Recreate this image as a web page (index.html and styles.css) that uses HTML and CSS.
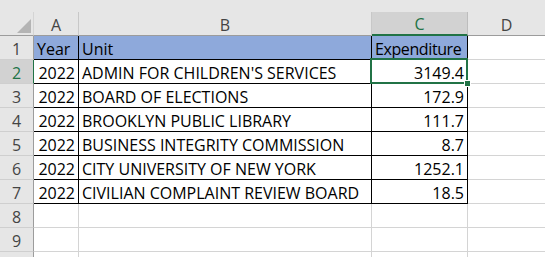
FILE: index.html
```html
<!DOCTYPE html>
<html lang="en">
<head>
    <meta charset="UTF-8">
    <title>Expenditure</title>
    <link rel="stylesheet" href="styles.css">
</head>
<body>
    <div class="topbar"></div>
    <div class="sheet">
        <div class="hd corner"><span class="tri"></span></div>
        <div class="hd col">A</div>
        <div class="hd col">B</div>
        <div class="hd col sel">C</div>
        <div class="hd col last">D</div>

        <div class="hd row">1</div>
        <div class="c num title dk">Year</div>
        <div class="c title dk">Unit</div>
        <div class="c title dk tight">Expenditure</div>
        <div class="c last"></div>

        <div class="hd row sel">2</div>
        <div class="c num dk">2022</div>
        <div class="c dk">ADMIN FOR CHILDREN'S SERVICES</div>
        <div class="c num dk active">3149.4<span class="handle"></span></div>
        <div class="c last"></div>

        <div class="hd row">3</div>
        <div class="c num dk">2022</div>
        <div class="c dk">BOARD OF ELECTIONS</div>
        <div class="c num dk">172.9</div>
        <div class="c last"></div>

        <div class="hd row">4</div>
        <div class="c num dk">2022</div>
        <div class="c dk">BROOKLYN PUBLIC LIBRARY</div>
        <div class="c num dk">111.7</div>
        <div class="c last"></div>

        <div class="hd row">5</div>
        <div class="c num dk">2022</div>
        <div class="c dk">BUSINESS INTEGRITY COMMISSION</div>
        <div class="c num dk">8.7</div>
        <div class="c last"></div>

        <div class="hd row">6</div>
        <div class="c num dk">2022</div>
        <div class="c dk">CITY UNIVERSITY OF NEW YORK</div>
        <div class="c num dk">1252.1</div>
        <div class="c last"></div>

        <div class="hd row">7</div>
        <div class="c num dk">2022</div>
        <div class="c dk">CIVILIAN COMPLAINT REVIEW BOARD</div>
        <div class="c num dk">18.5</div>
        <div class="c last"></div>

        <div class="hd row">8</div>
        <div class="c"></div>
        <div class="c"></div>
        <div class="c"></div>
        <div class="c last"></div>

        <div class="hd row">9</div>
        <div class="c"></div>
        <div class="c"></div>
        <div class="c"></div>
        <div class="c last"></div>

        <div class="hd row"></div>
        <div class="c"></div>
        <div class="c"></div>
        <div class="c"></div>
        <div class="c last"></div>
    </div>
</body>
</html>
```

FILE: styles.css
```css
body {
    margin: 0;
    background: #fff;
    font-family: "Open Sans", "Liberation Sans", sans-serif;
    font-size: 16px;
    color: #000;
}
.topbar {
    height: 12px;
    background: #e6e6e6;
}
.sheet {
    display: grid;
    grid-template-columns: 34px 45px 293px 96px 1fr;
    grid-auto-rows: 24px;
    height: 245px;
    overflow: hidden;
}
.hd, .c {
    box-sizing: border-box;
    border-right: 1px solid #d4d4d4;
    border-bottom: 1px solid #d4d4d4;
    display: flex;
    align-items: center;
    white-space: nowrap;
    line-height: 1;
}
.hd {
    background: #e6e6e6;
    color: #444;
    justify-content: center;
    font-size: 16px;
}
.col {
    border-bottom-color: #9c9c9c;
    border-right-color: #c8c8c8;
    padding-top: 2px;
}
.corner {
    position: relative;
    border-bottom-color: #9c9c9c;
}
.tri {
    position: absolute;
    right: 2px;
    bottom: 2px;
    width: 0;
    height: 0;
    border-left: 14px solid transparent;
    border-bottom: 14px solid #b4b4b4;
}
.row {
    border-right-color: #9c9c9c;
    border-bottom-color: #cfcfcf;
    padding-top: 2px;
}
.hd.sel {
    background: #d2d2d2;
    color: #217346;
}
.col.sel {
    border-bottom: 2px solid #217346;
    border-right-color: #bdbdbd;
}
.row.sel {
    border-right-color: #217346;
}
.col.last, .c.last {
    border-right: none;
}
.c {
    padding: 2px 3px 0 3px;
}
.num {
    justify-content: flex-end;
}
.title {
    background: #8ea9db;
    justify-content: flex-start;
}
.tight {
    letter-spacing: -0.4px;
}
.dk {
    border-right-color: #000;
    border-bottom-color: #000;
}
.active {
    position: relative;
}
.active::before {
    content: "";
    position: absolute;
    left: -2px;
    top: -2px;
    right: -1px;
    bottom: -1px;
    border: 2px solid #217346;
}
.handle {
    position: absolute;
    right: -4px;
    bottom: -4px;
    width: 5px;
    height: 5px;
    background: #217346;
    border: 1px solid #fff;
}
```
